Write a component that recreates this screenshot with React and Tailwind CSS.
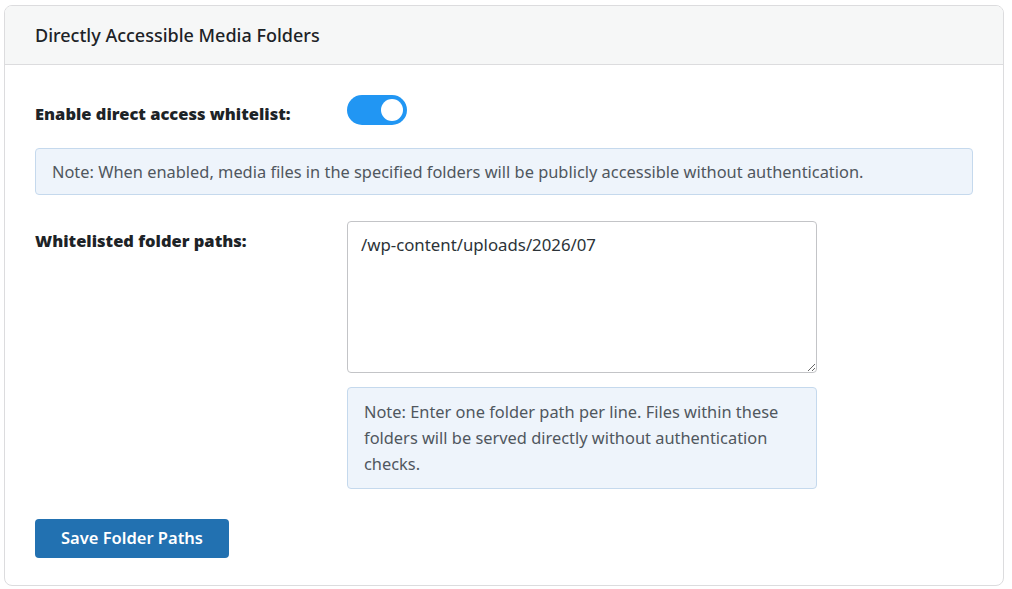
import React, { useState } from 'react';

const font = { fontFamily: '"Noto Sans", "Open Sans", sans-serif' };

export default function App() {
  const [enabled, setEnabled] = useState(true);
  const [paths, setPaths] = useState('/wp-content/uploads/2026/07');

  return (
    <div className="min-h-[589px] bg-white pt-[5px] pl-[4px] pr-[8px]" style={font}>
      <div className="w-[1000px] rounded-lg border border-[#dcdcde] bg-white overflow-hidden">
        <div className="h-[59px] px-[30px] flex items-center bg-[#f6f7f7] border-b border-[#dcdcde]">
          <h2 className="text-[18px] font-medium text-[#1d2327]">Directly Accessible Media Folders</h2>
        </div>

        <div className="px-[30px] pt-[30px] pb-[27px]">
          <div className="flex items-center h-[30px]">
            <label className="w-[312px] pt-[8px] text-[16.5px] font-black text-[#1d2327]">
              Enable direct access whitelist:
            </label>
            <button
              type="button"
              onClick={() => setEnabled(!enabled)}
              className={`relative w-[60px] h-[30px] rounded-full transition-colors ${
                enabled ? 'bg-[#2196f3]' : 'bg-[#c3c4c7]'
              }`}
            >
              <span
                className={`absolute top-[4px] w-[22px] h-[22px] rounded-full bg-white transition-all ${
                  enabled ? 'left-[34px]' : 'left-[4px]'
                }`}
              />
            </button>
          </div>

          <div className="mt-[23px] h-[47px] flex items-center px-[16px] pt-[2px] rounded border border-[#c5d9ed] bg-[#eef4fb] text-[16.4px] text-[#50575e]">
            Note: When enabled, media files in the specified folders will be publicly accessible without authentication.
          </div>

          <div className="mt-[26px] flex">
            <label className="w-[312px] pt-[8px] text-[16.5px] font-black text-[#1d2327]">
              Whitelisted folder paths:
            </label>
            <div className="w-[470px]">
              <textarea
                value={paths}
                onChange={(e) => setPaths(e.target.value)}
                className="block w-full h-[152px] px-[13px] py-[10px] rounded border border-[#c3c4c7] text-[16.8px] text-[#2c3338] leading-[26px] outline-none resize-y"
                style={font}
              />
              <div className="mt-[14px] px-[16px] py-[11px] rounded border border-[#c5d9ed] bg-[#eef4fb] text-[16.4px] leading-[26px] text-[#50575e]">
                Note: Enter one folder path per line. Files within these folders will be served directly without authentication checks.
              </div>
            </div>
          </div>

          <button
            type="button"
            className="mt-[30px] w-[194px] h-[39px] rounded bg-[#2271b1] text-white text-[16.5px] font-semibold"
          >
            Save Folder Paths
          </button>
        </div>
      </div>
    </div>
  );
}
